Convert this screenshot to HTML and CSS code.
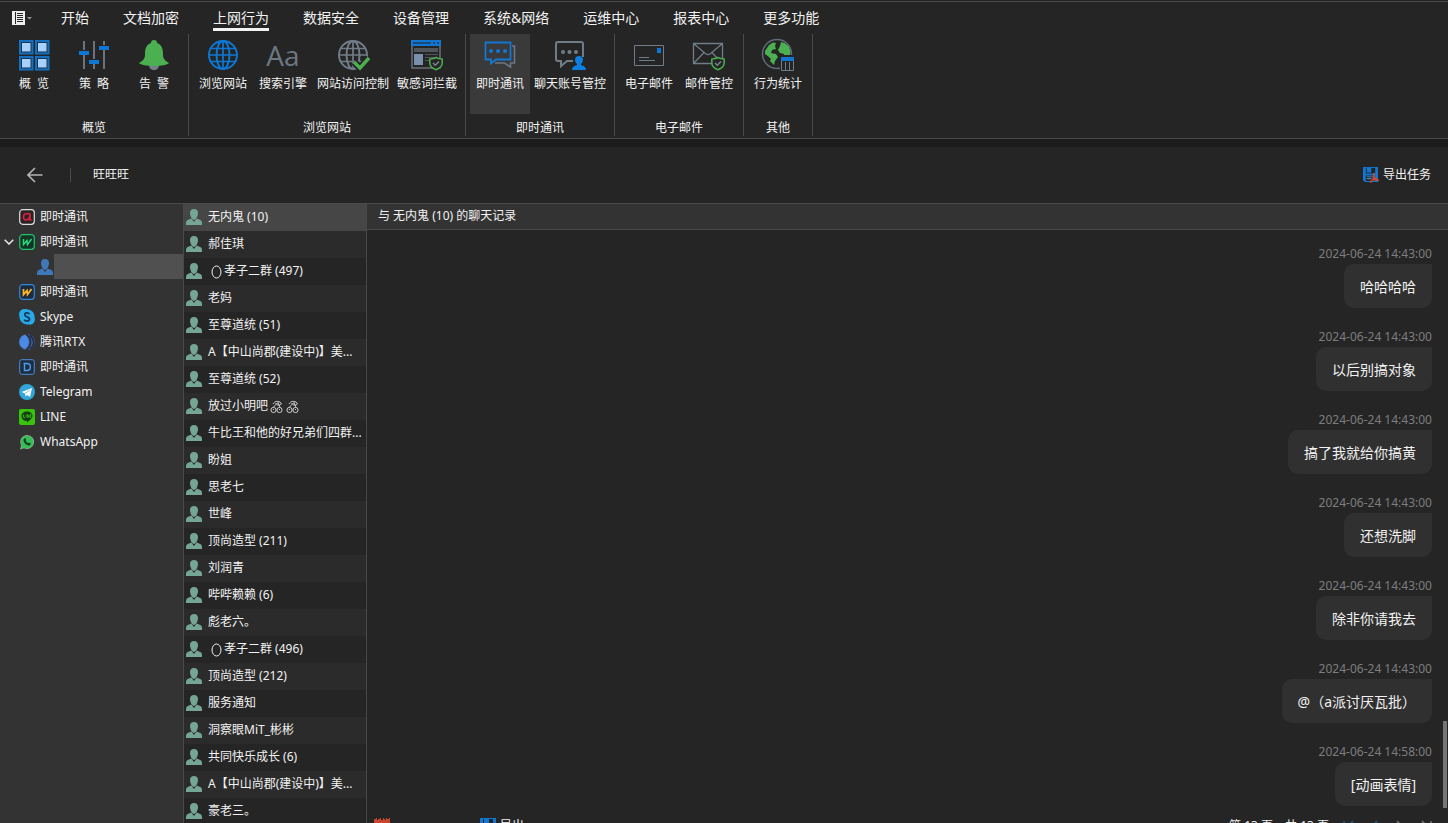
FILE: index.html
```html
<!DOCTYPE html>
<html lang="zh-CN">
<head>
<meta charset="utf-8">
<title>即时通讯</title>
<link rel="stylesheet" href="styles.css">
</head>
<body>
<svg class="sprite" aria-hidden="true">
  <symbol id="person" viewBox="0 0 16 16"><path fill="currentColor" d="M8 0c2.500 0 4 1.500 4 4 0 3-2 7-4 7S4 7 4 4c0-2.500 1.500-4 4-4zM0 16v-2c0-2 1-3 3-3.500l2.300-1L8 13l2.700-3.500 2.300 1c2 .5 3 1.500 3 3.500v2z"/></symbol>
  <symbol id="globe" viewBox="0 0 32 32"><g fill="none" stroke="currentColor" stroke-width="2"><circle cx="16" cy="16" r="14"/><ellipse cx="16" cy="16" rx="6.500" ry="14"/><path d="M16 2v28M4 9.500h24M2 16h28M4 22.500h24" stroke-width="1.700"/></g></symbol>
  <symbol id="save" viewBox="0 0 16 16"><path fill="#1277d3" d="M0 0h16v16H2l-2-2z"/><path fill="#252525" d="M3 1h10v6H3z"/><path fill="#1277d3" d="M4 1h5v5H4z"/><path fill="#252525" d="M9 2h1v3H9zM3 9h10v6H3z"/><path fill="#4ba0e8" d="M4 10h7v1H4zM4 12h5v1H4z"/></symbol>
  <symbol id="shield" viewBox="0 0 14 14"><path fill="#252525" stroke="#4caf50" stroke-width="1.500" d="M7 .8l1.500 1 4.700.8v4c0 3.200-2.500 5.300-6.200 6.700C3.300 11.900.8 9.800.8 6.600v-4l4.700-.8z"/><path fill="none" stroke="#788391" stroke-width="1.500" d="M4 6.500l2.300 2.300L10 5"/></symbol>
  <symbol id="egg" viewBox="0 0 16 14"><ellipse cx="8.500" cy="7" rx="4.500" ry="6" fill="none" stroke="currentColor"/></symbol>
  <symbol id="cherry" viewBox="0 0 16 14"><g fill="none" stroke="currentColor" stroke-width=".8"><circle cx="5.500" cy="10" r="2.600"/><circle cx="11.500" cy="10" r="2.600"/><path d="M5 7.500l5-5 2 5M5 4c2-3 4-3 7-2l1.500 2c-3 2-4.500 1-6-1M5 9.500h1M11 9.500h1"/></g></symbol>
</svg>

<div class="app">
  <header class="ribbon">
    <nav class="tabs">
      <button class="file-menu" aria-label="菜单">
        <svg width="20" height="14" viewBox="0 0 20 14"><path fill="#eee" d="M0 0h13v14H0z"/><path fill="#252525" d="M3 1h1v12H3zM5 2h6v1H5zM5 4h6v1H5zM5 6h6v1H5zM5 8h6v1H5zM5 10h6v1H5z"/><path fill="#999" d="M15 6h5l-2.500 2.500z"/></svg>
      </button>
      <a href="#">开始</a><a href="#">文档加密</a><a href="#" class="current">上网行为</a><a href="#">数据安全</a><a href="#">设备管理</a><a href="#">系统&amp;网络</a><a href="#">运维中心</a><a href="#">报表中心</a><a href="#">更多功能</a>
    </nav>
    <div class="groups">
      <section class="group">
        <div class="tools">
          <button class="tool"><svg viewBox="0 0 32 32"><path fill="#1570bf" d="M1 1h14.500v14.500H1zM17 1h14.500v14.500H17zM1 17h14.500v14.500H1zM17 17h14.500v14.500H17z"/><path fill="#153552" d="M3 3h10.500v10.500H3zM19 3h10.500v10.500H19zM3 19h10.500v10.500H3zM19 19h10.500v10.500H19z"/><path fill="#a9d0fa" d="M4 4h8.500v8.500H4zM20 4h8.500v8.500H20zM4 20h8.500v8.500H4zM20 20h8.500v8.500H20z"/></svg><span>概&ensp;览</span></button>
          <button class="tool"><svg viewBox="0 0 32 32"><path fill="#6d737b" d="M5 2h2v9H5zM5 16h2v14H5zM15 2h2v18h-2zM15 25h2v5h-2zM25 2h2v4h-2zM25 11h2v19h-2z"/><path fill="#0d78d4" d="M1 12h10v4H1zM11 21h10v4H11zM21 7h10v4H21z"/></svg><span>策&ensp;略</span></button>
          <button class="tool"><svg viewBox="0 0 32 32"><path fill="#727e8c" d="M11 26h10c0 3-2 5-5 5s-5-2-5-5z"/><path fill="#4caf50" d="M16 1c2 0 3 1 3 3 5 2 6 6 6 11 0 4 1 6 6 9-2 2-7 3-15 3S3 26 1 24c5-3 6-5 6-9 0-5 1-9 6-11 0-2 1-3 3-3z"/></svg><span>告&ensp;警</span></button>
        </div>
        <h2>概览</h2>
      </section>
      <section class="group">
        <div class="tools">
          <button class="tool blue"><svg><use href="#globe"/></svg><span>浏览网站</span></button>
          <button class="tool"><span class="aa">Aa</span><span>搜索引擎</span></button>
          <button class="tool gray"><svg viewBox="0 0 32 32"><use href="#globe" width="32" height="32"/><path fill="none" stroke="#252525" stroke-width="7" d="M17 23l6 6 9-10"/><path fill="none" stroke="#4caf50" stroke-width="3.500" d="M17 23l6 6 9-10"/></svg><span>网站访问控制</span></button>
          <button class="tool"><svg viewBox="0 0 32 32"><path fill="none" stroke="#68707b" stroke-width="1.500" d="M1 7v22h28V7"/><path fill="#1277d3" d="M0 1h30v6H0z"/><path fill="#174a78" d="M2 3h18v2H2zM22 3h2v2h-2zM26 3h2v2h-2z"/><path fill="#50555c" d="M3 9h24v4H3zM14 15h13v1H14zM14 18h10v1H14zM14 21h7v1h-7z"/><path fill="#7990ad" d="M3 15h9v11H3z"/><use href="#shield" x="18" y="17" width="14" height="15"/></svg><span>敏感词拦截</span></button>
        </div>
        <h2>浏览网站</h2>
      </section>
      <section class="group">
        <div class="tools">
          <button class="tool active"><svg viewBox="0 0 32 32"><path fill="none" stroke="#6c7682" stroke-width="1.600" d="M28 7h2.500v17h-4v4l-6-4H11"/><path fill="#3a3a3a" stroke="#1277d3" stroke-width="1.800" d="M1.500 3.500h25v17H12l-5 4v-4H1.500z"/><g fill="#1277d3"><circle cx="7" cy="12" r="2"/><circle cx="14" cy="12" r="2"/><circle cx="21" cy="12" r="2"/></g></svg><span>即时通讯</span></button>
          <button class="tool"><svg viewBox="0 0 32 32"><path fill="none" stroke="#717c89" stroke-width="2" d="M19 22h-6l-6 5v-5H4c-1.500 0-2-1-2-2V5c0-2 1-2 2-2h23c1.500 0 2 1 2 2v13"/><g fill="#717c89"><circle cx="9" cy="13" r="2"/><circle cx="15.500" cy="13" r="2"/><circle cx="22" cy="13" r="2"/></g><path fill="#0d7fe0" d="M25 17c3 0 4 2 4 4 0 1.500-1 3-2 4v1c3 1 5 2 5 5H18c0-3 2-4 5-5v-1c-1-1-2-2.500-2-4 0-2 1-4 4-4z"/></svg><span>聊天账号管控</span></button>
        </div>
        <h2>即时通讯</h2>
      </section>
      <section class="group">
        <div class="tools">
          <button class="tool"><svg viewBox="0 0 32 32"><path fill="none" stroke="#717c89" d="M1.500 6.500h29v20h-29zM6 18.500h10M6 21.500h16"/><path fill="#0d78d4" d="M24 9h4v5h-4z"/></svg><span>电子邮件</span></button>
          <button class="tool"><svg viewBox="0 0 32 32"><path fill="none" stroke="#717c89" stroke-width="1.300" d="M.5 4.500h29v20H.5zM.5 4.500L13 15q2 1 4 0L29.500 4.500M.5 24.500L11 13.500M19 13.500l10 11"/><use href="#shield" x="18" y="17" width="14" height="15"/></svg><span>邮件管控</span></button>
        </div>
        <h2>电子邮件</h2>
      </section>
      <section class="group">
        <div class="tools">
          <button class="tool"><svg viewBox="0 0 32 32"><circle cx="15" cy="15" r="14.500" fill="#252525" stroke="#606b77" stroke-width="1.500"/><path fill="#4caf50" d="M11 3.500L7 6l-4 6v3l4 3 2 2-1 2 4 4 1-4 3-4-2-3-5-1 1-3 4-1-1-3 1-3zM19 3l-1 4-2 4 2 3 4 1v2h6l.5-5-2-5-4-3z"/><path fill="#252525" d="M18 16h14v16H18z"/><path fill="#1277d3" d="M19 18h13v4H19z"/><path fill="none" stroke="#717c89" d="M19.500 22v9.500h12V22M23.500 23v8M27.500 23v8"/></svg><span>行为统计</span></button>
        </div>
        <h2>其他</h2>
      </section>
    </div>
  </header>

  <div class="toolbar">
    <button class="back" aria-label="返回"><svg width="16" height="16" viewBox="0 0 16 16"><path fill="none" stroke="#b4b4b4" stroke-width="1.600" d="M8 1L1 8l7 7M1 8h14.500"/></svg></button>
    <h1>旺旺旺</h1>
    <button class="export"><svg width="16" height="16" viewBox="0 0 16 16"><use href="#save" width="15" height="15"/><path fill="none" stroke="#d9482b" stroke-width="1.600" d="M11 6v3c0 3-2 5-4 6.500M11 9c0 2 2 4 5 4.500M8.500 13l6-1"/></svg>导出任务</button>
  </div>

  <main class="workspace">
    <nav class="apps">
      <ul>
        <li><a href="#"><svg viewBox="0 0 16 16"><rect x=".7" y=".7" width="14.600" height="14.600" rx="3" fill="#2a2224" stroke="#ddd" stroke-width="1.200"/><path fill="none" stroke="#e0203c" stroke-width="1.500" d="M11 4.800H7.500C5.500 4.800 4.500 6 4.500 8s.5 3 2.500 3c3 0 4-3 4-6.200v6.200h1.500"/></svg>即时通讯</a></li>
        <li><a href="#"><svg class="chevron" viewBox="0 0 10 6"><path fill="none" stroke="#e8e8e8" stroke-width="1.500" d="M.7.7L5 5 9.300.7"/></svg><svg viewBox="0 0 16 16"><rect x=".7" y=".7" width="14.600" height="14.600" rx="3" fill="#123526" stroke="#1fc16b" stroke-width="1.200"/><path fill="none" stroke="#25d978" stroke-width="1.500" d="M4.500 5v5.500l3.500-4 .5 4L12.500 5"/></svg>即时通讯</a></li>
        <li class="child"><a href="#" aria-label="帐号"><svg viewBox="0 0 16 16"><use href="#person"/></svg><span class="account"></span></a></li>
        <li><a href="#"><svg viewBox="0 0 16 16"><rect x=".7" y=".7" width="14.600" height="14.600" rx="3" fill="#1e2b3b" stroke="#3287dc" stroke-width="1.200"/><path fill="none" stroke="#ffb52b" stroke-width="1.800" d="M4.500 5v5.500l3.500-4 .5 4L12.500 5"/></svg>即时通讯</a></li>
        <li><a href="#"><svg viewBox="0 0 16 16"><path fill="#2aa8e8" d="M5 0c2-.3 3 .5 4 .5 4 .5 7 4 6.500 7.500C17 12 14 16.500 10 15.500 5 16 0 12 .6 8-1 4 1 .5 5 0z"/><path fill="none" stroke="#173c58" stroke-width="1.800" d="M10.500 5.200C9.500 3.300 5.800 3.600 5.800 5.700 5.800 8.300 10.500 7.300 10.500 10c0 2.600-4.300 2.600-5.200.6"/></svg>Skype</a></li>
        <li><a href="#"><svg viewBox="0 0 16 16"><circle cx="8" cy="8" r="8" fill="#47648f"/><path fill="none" stroke="#24304a" stroke-width="1.800" d="M7 0c6 4 6 12 0 16M11 1c5 5 5 10 0 14"/><path fill="#4a8be8" d="M6 1c5 4 5 10 0 14-7-2-8-11 0-14z"/></svg>腾讯RTX</a></li>
        <li><a href="#"><svg viewBox="0 0 16 16"><rect x=".7" y=".7" width="14.600" height="14.600" rx="2" fill="#1f2d40" stroke="#4d8ed6"/><path fill="none" stroke="#4b9bf0" stroke-width="1.400" d="M5.500 4.500v7H8c4.500 0 4.500-7 0-7H4.500"/></svg>即时通讯</a></li>
        <li><a href="#"><svg viewBox="0 0 16 16"><circle cx="8" cy="8" r="8" fill="#31a6d9"/><path fill="#fff" d="M2.500 8L13 4l-2 9-3-2-1.500 1.500L6 9.500z"/><path stroke="#8cc5df" d="M6 9.500l5-3.500"/></svg>Telegram</a></li>
        <li><a href="#"><svg viewBox="0 0 16 16"><rect width="16" height="16" rx="2" fill="#3ac30c"/><path fill="#163e12" d="M8 2.500c3 0 5.500 2 5.500 4.500S11 11 8 13.500V12C5 12 2.500 10 2.500 7S5 2.500 8 2.500z"/><path fill="none" stroke="#3ac30c" stroke-width=".8" d="M4.500 5.500v3H6M7 5.500v3M8.500 8.500v-3l1.500 3v-3M12.500 5.500h-1.200v3h1.200M11.300 7h1"/></svg>LINE</a></li>
        <li><a href="#"><svg viewBox="0 0 16 16"><path fill="#8fae96" d="M8 1a7 7 0 1 1-3 13.300L1 15.500l1.200-4A7 7 0 0 1 8 1z"/><path fill="#35bd58" d="M8 1.800a6.200 6.200 0 1 1-3 11.600l-2.800 1 .8-3A6.200 6.200 0 0 1 8 1.800z"/><path fill="#183f22" d="M5 4.500l1.500-.3.8 2-.8.9 2.400 2.200 1-.9 1.800 1c0 2-2 2.500-3.500 1.700C6 10 3.500 7 5 4.500z"/></svg>WhatsApp</a></li>
      </ul>
    </nav>

    <ul class="contacts">
      <li class="selected"><svg><use href="#person"/></svg><span>无内鬼 (10)</span></li>
      <li><svg><use href="#person"/></svg><span>郝佳琪</span></li>
      <li><svg><use href="#person"/></svg><span><svg class="emoji"><use href="#egg"/></svg>孝子二群 (497)</span></li>
      <li><svg><use href="#person"/></svg><span>老妈</span></li>
      <li><svg><use href="#person"/></svg><span>至尊道统 (51)</span></li>
      <li><svg><use href="#person"/></svg><span>A【中山尚郡(建设中)】美...</span></li>
      <li><svg><use href="#person"/></svg><span>至尊道统 (52)</span></li>
      <li><svg><use href="#person"/></svg><span>放过小明吧<svg class="emoji"><use href="#cherry"/></svg><svg class="emoji"><use href="#cherry"/></svg></span></li>
      <li><svg><use href="#person"/></svg><span>牛比王和他的好兄弟们四群...</span></li>
      <li><svg><use href="#person"/></svg><span>盼姐</span></li>
      <li><svg><use href="#person"/></svg><span>思老七</span></li>
      <li><svg><use href="#person"/></svg><span>世峰</span></li>
      <li><svg><use href="#person"/></svg><span>顶尚造型 (211)</span></li>
      <li><svg><use href="#person"/></svg><span>刘润青</span></li>
      <li><svg><use href="#person"/></svg><span>哔哔赖赖 (6)</span></li>
      <li><svg><use href="#person"/></svg><span>彪老六。</span></li>
      <li><svg><use href="#person"/></svg><span><svg class="emoji"><use href="#egg"/></svg>孝子二群 (496)</span></li>
      <li><svg><use href="#person"/></svg><span>顶尚造型 (212)</span></li>
      <li><svg><use href="#person"/></svg><span>服务通知</span></li>
      <li><svg><use href="#person"/></svg><span>洞察眼MiT_彬彬</span></li>
      <li><svg><use href="#person"/></svg><span>共同快乐成长 (6)</span></li>
      <li><svg><use href="#person"/></svg><span>A【中山尚郡(建设中)】美...</span></li>
      <li><svg><use href="#person"/></svg><span>豪老三。</span></li>
    </ul>

    <section class="chat">
      <h2>与 无内鬼 (10) 的聊天记录</h2>
      <div class="scroller">
        <div class="messages">
          <article><time>2024-06-24 14:43:00</time><p>哈哈哈哈</p></article>
          <article><time>2024-06-24 14:43:00</time><p>以后别搞对象</p></article>
          <article><time>2024-06-24 14:43:00</time><p>搞了我就给你搞黄</p></article>
          <article><time>2024-06-24 14:43:00</time><p>还想洗脚</p></article>
          <article><time>2024-06-24 14:43:00</time><p>除非你请我去</p></article>
          <article><time>2024-06-24 14:43:00</time><p>@（a派讨厌瓦批）</p></article>
          <article><time>2024-06-24 14:58:00</time><p>[动画表情]</p></article>
        </div>
        <div class="track"><div class="thumb"></div></div>
      </div>
      <footer>
        <button aria-label="日历"><svg width="16" height="16" viewBox="0 0 16 16"><path fill="#c9452f" d="M0 1h2V0h1v2h1V1h2V0h1v2h2V0h1v1h1v1h1V0h1v1h2V0h1v16H0z"/></svg></button>
        <button class="save"><svg width="16" height="16"><use href="#save"/></svg>导出</button>
        <span class="pages">第 13 页，共 13 页</span>
        <span class="pager">
          <button aria-label="首页"><svg viewBox="0 0 12 14"><path fill="none" stroke="#1a5a8d" stroke-width="1.500" d="M1 2v10M10 2L5 7l5 5"/></svg></button>
          <button aria-label="上一页"><svg viewBox="0 0 12 14"><path fill="none" stroke="#1a5a8d" stroke-width="1.500" d="M8 2L3 7l5 5"/></svg></button>
          <button aria-label="下一页"><svg viewBox="0 0 12 14"><path fill="none" stroke="#777" stroke-width="1.500" d="M2 2l5 5-5 5"/></svg></button>
          <button aria-label="末页"><svg viewBox="0 0 12 14"><path fill="none" stroke="#777" stroke-width="1.500" d="M10 2v10M1 2l5 5-5 5"/></svg></button>
        </span>
      </footer>
    </section>
  </main>
</div>
</body>
</html>
```

FILE: styles.css
```css
* { box-sizing: border-box; margin: 0; padding: 0; }
body {
  height: 100vh;
  overflow: hidden;
  background: #252525;
  color: #f2f2f2;
  font: 12px/18px "Noto Sans", "Noto Sans CJK SC", sans-serif;
}
.sprite { display: none; }
ul { list-style: none; }
a { color: inherit; text-decoration: none; }
button { border: 0; background: none; color: inherit; font: inherit; }
h1, h2 { font-size: 12px; font-weight: 400; }
svg { flex: none; }

.app { display: flex; flex-direction: column; height: calc(100vh + 19px); }

.ribbon {
  margin-top: 1px;
  border-top: 1px solid #4a4a4a;
  border-bottom: 1px solid #4a4a4a;
}
.tabs { display: flex; gap: 34px; height: 32px; padding-left: 12px; font-size: 14px; line-height: 32px; }
.tabs a { height: 29px; white-space: nowrap; }
.tabs .current { border-bottom: 3px solid #f2f2f2; }
.file-menu { display: flex; align-items: center; width: 15px; }
.groups { display: flex; }
.group {
  display: flex;
  flex-direction: column;
  margin-bottom: 2px;
  padding: 0 4px;
  border-right: 1px solid #4a4a4a;
  text-align: center;
}
.tools { display: flex; }
.tool {
  display: flex;
  flex-direction: column;
  align-items: center;
  gap: 4px;
  min-width: 60px;
  height: 80px;
  padding: 5px 4px 0;
  white-space: nowrap;
}
.tool svg { width: 32px; height: 32px; overflow: visible; }
.tool.active { background: #3a3a3a; }
.blue svg { color: #0d78d4; }
.gray svg { color: #717c89; }
.aa { height: 32px; color: #6d7783; font: 28px/32px "Open Sans", sans-serif; }
.group h2 { padding-top: 6px; line-height: 16px; }

.toolbar {
  display: flex;
  align-items: center;
  height: 65px;
  padding: 0 17px 0 27px;
  border-top: 8px solid #1c1c1c;
  border-bottom: 1px solid #4a4a4a;
}
.back { display: flex; }
.toolbar h1 { margin-left: 27px; padding-left: 22px; border-left: 1px solid #4a4a4a; line-height: 14px; }
.export { display: flex; align-items: center; gap: 4px; margin-left: auto; }

.workspace { flex: 1; min-height: 0; display: grid; grid-template-columns: 183px 184px 1fr; }
.apps { background: #333; }
.apps a { position: relative; display: flex; align-items: center; gap: 5px; height: 25px; padding-left: 19px; line-height: 24px; }
.apps svg { width: 16px; height: 16px; }
.apps .chevron { position: absolute; left: 4px; width: 10px; height: 6px; }
.apps .child a { gap: 1px; padding-left: 37px; color: #3f78b8; }
.account { flex: 1; align-self: stretch; background: #505050; }

.contacts { overflow: hidden; border-left: 1px solid #484848; border-right: 1px solid #484848; }
.contacts li { display: flex; align-items: center; gap: 6px; height: 27px; padding: 0 0 1px 2px; white-space: nowrap; }
.contacts li:nth-child(even) { background: #2b2b2b; }
.contacts li.selected { background: #464646; }
.contacts li > svg { width: 16px; height: 16px; color: #75a594; }
.contacts .emoji { width: 16px; height: 14px; vertical-align: middle; }

.chat { display: flex; flex-direction: column; min-width: 0; min-height: 0; }
.chat h2 { height: 26px; padding-left: 11px; background: #333; border-bottom: 1px solid #4a4a4a; line-height: 24px; }
.scroller { flex: 1; min-height: 0; display: flex; overflow: hidden; }
.messages { flex: 1; display: flex; flex-direction: column; gap: 17px; padding: 12px 11px 0 16px; }
.messages article { display: flex; flex-direction: column; align-items: flex-end; }
.messages time { padding-top: 2px; color: #7d7d7d; line-height: 20px; }
.messages p { padding: 13px 16px 11px; border-radius: 10px 0 10px 10px; background: #303030; font-size: 14px; line-height: 20px; }
.track { display: flex; flex-direction: column; justify-content: flex-end; width: 5px; padding-bottom: 2px; }
.thumb { width: 4px; height: 15%; background: #757575; }
.chat footer { display: flex; align-items: center; height: 32px; padding: 0 15px 0 7px; }
.chat footer button { display: flex; align-items: center; gap: 4px; }
.save { margin-left: 90px; }
.pages { margin-left: auto; }
.pager { display: flex; gap: 14px; margin-left: 14px; }
.pager svg { width: 12px; height: 14px; }
```
